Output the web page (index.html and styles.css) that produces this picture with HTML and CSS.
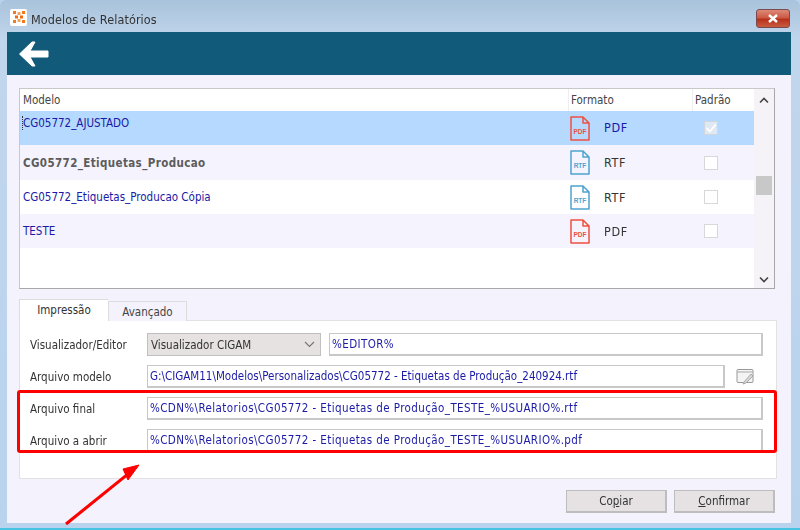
FILE: index.html
```html
<!DOCTYPE html>
<html lang="pt">
<head>
<meta charset="utf-8">
<title>Modelos de Relatórios</title>
<link rel="stylesheet" href="styles.css">
</head>
<body>
<div class="window">
  <header class="titlebar">
    <div class="appicon">
      <svg width="14" height="14" viewBox="0 0 14 14"><rect x="1" y="1" width="3" height="3" fill="#f47a20"/><rect x="5.500" y="2" width="3" height="3" fill="#f9a15a"/><rect x="10" y="1" width="3" height="3" fill="#f47a20"/><rect x="3" y="5.500" width="3" height="3" fill="#ef6a10"/><rect x="8" y="5.500" width="3" height="3" fill="#ef6a10"/><rect x="1" y="10" width="3" height="3" fill="#f47a20"/><rect x="5.500" y="9" width="3" height="3" fill="#f9a15a"/><rect x="10" y="10" width="3" height="3" fill="#f47a20"/></svg>
    </div>
    <span class="title">Modelos de Relatórios</span>
    <div class="close"><svg width="12" height="9" viewBox="0 0 12 9"><path d="M2 1l8 7M10 1L2 8" stroke="#fff" stroke-width="2.400" fill="none"/></svg></div>
  </header>
  <div class="client">
    <div class="band">
      <svg width="32" height="26" viewBox="0 0 32 26"><path d="M14 1L1.500 13 14 25h3l-5-9h18v-6H12l5-9z" fill="#fff" stroke="#fff" stroke-width="1"/></svg>
    </div>
    <main class="content">
      <section class="list">
        <div class="rows">
          <div class="row head"><span class="c-name">Modelo</span><span class="c-fmt">Formato</span><span class="c-std">Padrão</span></div>
          <div class="row sel up">
            <span class="c-name blue raised"><span class="caret">CG05772_AJUSTADO</span></span>
            <span class="c-fmt"><svg class="doc pdf" viewBox="0 0 20 25"><path d="M1 1h12l6 6v17H1zM13 1v6h6"/><text x="10" y="17.500">PDF</text></svg><b class="blue">PDF</b></span>
            <span class="c-std"><svg class="check" viewBox="0 0 14 14"><rect x=".5" y=".5" width="13" height="13"/><path d="M2.500 7l3.500 3.500 5.500-7"/></svg></span>
          </div>
          <div class="row alt tall">
            <span class="c-name strong">CG05772_Etiquetas_Producao</span>
            <span class="c-fmt"><svg class="doc rtf" viewBox="0 0 20 25"><path d="M1 1h12l6 6v17H1zM13 1v6h6"/><text x="10" y="17.500">RTF</text></svg><b>RTF</b></span>
            <span class="c-std"><i class="box"></i></span>
          </div>
          <div class="row">
            <span class="c-name blue">CG05772_Etiquetas_Producao Cópia</span>
            <span class="c-fmt"><svg class="doc rtf" viewBox="0 0 20 25"><path d="M1 1h12l6 6v17H1zM13 1v6h6"/><text x="10" y="17.500">RTF</text></svg><b>RTF</b></span>
            <span class="c-std"><i class="box"></i></span>
          </div>
          <div class="row alt">
            <span class="c-name blue">TESTE</span>
            <span class="c-fmt"><svg class="doc pdf" viewBox="0 0 20 25"><path d="M1 1h12l6 6v17H1zM13 1v6h6"/><text x="10" y="17.500">PDF</text></svg><b>PDF</b></span>
            <span class="c-std"><i class="box"></i></span>
          </div>
        </div>
        <div class="scroll">
          <svg width="10" height="7" viewBox="0 0 10 7"><path d="M1 5.500l4-4 4 4" fill="none" stroke="#444" stroke-width="1.600"/></svg>
          <div class="thumb"></div>
          <svg width="10" height="7" viewBox="0 0 10 7"><path d="M1 1.500l4 4 4-4" fill="none" stroke="#444" stroke-width="1.600"/></svg>
        </div>
      </section>

      <nav class="tabs">
        <div class="tab active">Impressão</div>
        <div class="tab">Avançado</div>
      </nav>
      <section class="panel">
        <div class="field">
          <label>Visualizador/Editor</label>
          <div class="combo">Visualizador CIGAM<svg width="11" height="7" viewBox="0 0 11 7"><path d="M1 1l4.500 4.500L10 1" fill="none" stroke="#777" stroke-width="1.200"/></svg></div>
          <div class="input editor wide">%EDITOR%</div>
        </div>
        <div class="field">
          <label>Arquivo modelo</label>
          <div class="input short">G:\CIGAM11\Modelos\Personalizados\CG05772 - Etiquetas de Produção_240924.rtf</div>
          <svg class="pick" width="20" height="18" viewBox="0 0 20 18"><path d="M3 1.500h14a1 1 0 0 1 1 1v11a1 1 0 0 1-1 1H3a1 1 0 0 1-1-1v-11a1 1 0 0 1 1-1z" fill="#f4f4f4" stroke="#999"/><path d="M2 4h16" stroke="#aaa"/><path d="M9 14l7-8 2 2-7 7-3 1z" fill="#d8d8d8" stroke="#aaa"/></svg>
        </div>
        <div class="field">
          <label>Arquivo final</label>
          <div class="input wide">%CDN%\Relatorios\CG05772 - Etiquetas de Produção_TESTE_%USUARIO%.rtf</div>
        </div>
        <div class="field">
          <label>Arquivo a abrir</label>
          <div class="input wide">%CDN%\Relatorios\CG05772 - Etiquetas de Produção_TESTE_%USUARIO%.pdf</div>
        </div>
      </section>
      <footer class="actions">
        <button class="btn" type="button">Co<u>p</u>iar</button>
        <button class="btn" type="button"><u>C</u>onfirmar</button>
      </footer>
    </main>
  </div>
  <div class="redbox"></div>
  <svg class="arrow" width="90" height="70" viewBox="0 0 90 70"><path d="M2 66L64 16" stroke="#f00" stroke-width="3" fill="none"/><path d="M75 7L59 11l5 11z" fill="#f00" stroke="#f00"/></svg>
</div>
</body>
</html>
```
FILE: styles.css
```css
* { box-sizing: border-box; }
html, body { margin: 0; padding: 0; background: #b9d3ee; }
body { font-family: "DejaVu Sans Condensed", "DejaVu Sans", sans-serif; font-stretch: condensed; font-size: 11.5px; color: #333; }

.window {
  position: relative;
  width: 800px;
  height: 530px;
  overflow: hidden;
  display: flex;
  flex-direction: column;
  padding: 0 9px 5px 7px;
  background: linear-gradient(#a9c3dc 0, #c0d6ec 40px, #b9d3ee 100%);
  border-bottom: 2px solid #46c4e2;
  border-radius: 6px 6px 0 0;
  filter: blur(.35px);
}

.titlebar { height: 32px; display: flex; align-items: center; flex: none; padding: 6px 0 0 3px; }
.appicon { width: 17px; height: 17px; margin-top: -4px; background: #fff; border-radius: 2px; display: flex; align-items: center; justify-content: center; }
.title { margin-left: 4px; font-size: 12.5px; letter-spacing: .1px; color: #333; }
.close {
  margin-left: auto;
  margin-top: -2px;
  margin-right: 1px;
  width: 34px;
  height: 19px;
  border: 1px solid #7a4a50;
  border-radius: 3px;
  background: linear-gradient(#dc8a78 0, #cc5a44 45%, #b8301c 55%, #c85a40 100%);
  display: flex;
  align-items: center;
  justify-content: center;
}

.client { flex: 1; display: flex; flex-direction: column; min-height: 0; background: #f4f2fc; }
.band { height: 43px; flex: none; background: #125a7a; display: flex; align-items: center; padding-left: 11px; }

.content { flex: 1; padding: 13px 14px 0 12px; display: flex; flex-direction: column; }

.list { height: 201px; flex: none; width: 756px; display: flex; background: #fff; border: 1px solid #a8a8a8; border-left-color: #c8c8c8; border-top-color: #c8c8c8; }
.rows { flex: 1; }
.row { height: 34px; display: flex; align-items: center; }
.row.tall { height: 35px; }
.row.head { height: 22px; color: #444; background: #fff; }
.row.sel { background: #b5d9ff; }
.row.alt { background: #f5f3fd; }
.c-name { width: 548px; padding-left: 3px; }
.c-fmt { width: 124px; display: flex; align-items: center; padding-left: 2px; }
.c-std { width: 62px; padding-left: 3px; }
.head span { height: 22px; line-height: 22px; }
.head .c-fmt, .head .c-std { border-left: 1px solid #eee; padding-left: 2px; }
.blue { color: #1a1aa6; }
.raised { align-self: flex-start; margin-top: 5px; }
.caret { display: inline-block; border-left: 1px dotted #333; margin-left: -1px; padding-left: 0; }
.strong { font-weight: bold; letter-spacing: .38px; color: #5c5c5c; }
.c-fmt b { font-weight: normal; font-size: 12.5px; letter-spacing: .6px; color: #333; margin-left: 14px; }
.c-fmt b.blue { color: #1a1aa6; margin-top: -2px; }
.row .c-std:not(.head span) { display: flex; justify-content: flex-start; padding-left: 12px; }
.head .c-std { padding-left: 2px !important; }

.doc { width: 20px; height: 25px; fill: #fff; stroke-width: 1.500; flex: none; }
.doc path { fill: none; stroke-linejoin: round; }
.doc text { font: bold 6.500px "Liberation Sans", Arial, sans-serif; text-anchor: middle; stroke: none; }
.pdf path { stroke: #ee5040; }
.pdf text { fill: #ee5040; }
.rtf path { stroke: #4ea4d0; }
.rtf text { fill: #4ea4d0; }

.box { display: block; width: 14px; height: 14px; background: #fff; border: 1px solid #d8d8d8; }
.check { width: 14px; height: 14px; }
.check rect { fill: #dfe9f4; stroke: #cfd6de; }
.check path { fill: none; stroke: #fff; stroke-width: 1.800; }

.scroll { width: 20px; flex: none; background: #f5f3f7; display: flex; flex-direction: column; align-items: center; padding-top: 8px; position: relative; }
.thumb { width: 16px; height: 19px; background: #c8c8c8; margin-top: 72px; }
.scroll svg:last-child { margin-top: auto; margin-bottom: 5px; }

.tabs { display: flex; align-items: flex-end; height: 32px; flex: none; margin-top: -1px; position: relative; top: 1px; padding-top: 10px; }
.tab { width: 79px; height: 20px; line-height: 20px; text-align: center; background: #f4f2fc; border: 1px solid #dcdcdc; border-bottom: 0; color: #444; }
.tab.active { width: 89px; height: 22px; line-height: 20px; background: #fff; border-right: 0; position: relative; z-index: 1; color: #333; }

.panel { height: 159px; flex: none; width: 758px; background: #fff; border: 1px solid #e2e2e2; padding: 12px 13px 0 10px; display: flex; flex-direction: column; gap: 9px; }
.field { height: 23px; display: flex; align-items: center; }
.field label { width: 117px; flex: none; color: #333; }
.input { flex: 1; height: 23px; line-height: 21px; padding-left: 2px; border: 1px solid #c8c8c8; border-width: 1px 2px 2px 1px; color: #1a1aa6; background: #fff; white-space: nowrap; overflow: hidden; }
.input.wide { letter-spacing: .4px; }
.input.short { flex: none; width: 578px; }
.input.editor { margin-left: 8px; }
.combo { width: 174px; flex: none; height: 23px; background: #e6e2e2; border: 1px solid #c0c0c0; display: flex; align-items: center; justify-content: space-between; padding: 0 5px 0 3px; color: #333; }
.pick { margin-left: 10px; }

.actions { display: flex; justify-content: flex-end; gap: 7px; margin-top: 11px; width: 756px; }
.btn { width: 101px; height: 23px; padding: 0; background: #e6e2e4; border: 1px solid #bdbdbd; border-width: 1px 2px 2px 1px; font: inherit; color: #333; }

.redbox { position: absolute; left: 17px; top: 390px; width: 760px; height: 63px; border: 3px solid #f00; border-radius: 3px; }
.arrow { position: absolute; left: 64px; top: 458px; }
```
